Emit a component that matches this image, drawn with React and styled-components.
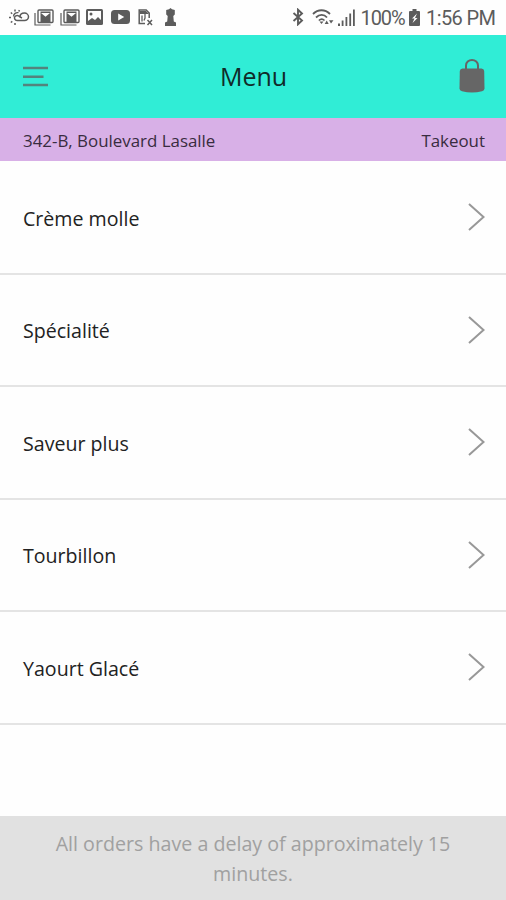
import styled, { createGlobalStyle } from "styled-components";

const GlobalStyle = createGlobalStyle`
  * {
    box-sizing: border-box;
  }

  body {
    margin: 0;
    background-color: #fefefe;
    font-family: "Open Sans", "Noto Sans", sans-serif;
  }
`;

const Screen = styled.div`
  display: flex;
  flex-direction: column;
  width: 506px;
  height: 900px;
  overflow: hidden;
`;

const StatusBar = styled.div`
  display: flex;
  justify-content: space-between;
  height: 34.5px;
  padding: 0 11px 0 9px;
  color: #5c5c5c;
`;

const StatusGroup = styled.div`
  display: flex;
  align-items: center;
`;

const StatusSlot = styled.span`
  margin-left: ${(props) => props.$space || "0"};

  svg {
    display: block;
  }
`;

const StatusText = styled.span`
  width: ${(props) => props.$width};
  margin-left: ${(props) => props.$space};
  padding-top: 1px;
  font-family: Roboto, sans-serif;
  font-size: 20px;
  line-height: 34px;
  letter-spacing: ${(props) => props.$spacing};
  white-space: nowrap;
`;

const Header = styled.header`
  display: grid;
  grid-template-columns: 60px 1fr 60px;
  align-items: center;
  height: 83.5px;
  padding: 0 21px 0 23px;
  background-color: #30edd6;
`;

const HeaderButton = styled.button`
  display: flex;
  justify-content: ${(props) => props.$align};
  padding: 0;
  border: 0;
  background: none;
`;

const Title = styled.h1`
  margin: 0;
  padding-right: 1px;
  font-size: 25px;
  font-weight: 400;
  line-height: 34px;
  text-align: center;
  color: #102b29;
`;

const OrderInfo = styled.div`
  display: flex;
  align-items: center;
  justify-content: space-between;
  height: 43px;
  padding: 1px 21px 0 23px;
  background-color: #d8b0e7;
  color: #382c40;
  font-size: 16.9px;
`;

const MenuList = styled.ul`
  flex: 1;
  margin: 0;
  padding: 1px 0 0;
  list-style: none;
`;

const MenuItem = styled.li`
  display: flex;
  align-items: center;
  justify-content: space-between;
  height: 112.5px;
  padding: 0 21px 0 23px;
  border-bottom: 2px solid #e4e4e4;
  color: #222222;
  font-size: 19.6px;
`;

const ItemName = styled.span`
  padding-top: 2px;
`;

const Notice = styled.footer`
  height: 84px;
  padding: 13px 40px 0;
  background-color: #e1e1e1;
  color: #a0a0a0;
  font-size: 19.65px;
  line-height: 29.5px;
  text-align: center;
`;

const items = [
  "Crème molle",
  "Spécialité",
  "Saveur plus",
  "Tourbillon",
  "Yaourt Glacé",
];

function WeatherIcon() {
  return (
    <svg width="21" height="18" viewBox="0 0 21 18" fill="none" stroke="currentColor">
      <path
        d="M8 12.500h7.500a4 3.700 0 0 0 0-7.400c-3 0-4.500 1.500-4.500 3.900M8 12.500a2.700 2.500 0 1 1 2.500-3.800l2.500 1.300"
        strokeWidth="1.500"
      />
      <path d="M4.500 8.500a4 4 0 0 1 5-3.800" strokeWidth="1.300" />
      <path d="M0 9.500h2M1.800 4.500l1.400 1.200M6 1.500v2M10.500 2.200l-.8 1.300M1.800 14.500l1.500-1.200M6 15v2" strokeWidth="1.500" />
    </svg>
  );
}

function MailIcon() {
  return (
    <svg width="20" height="17" viewBox="0 0 20 17" fill="none" stroke="currentColor">
      <path d="M1 4v12h15.500" strokeWidth="1.200" />
      <rect x="4" y="1" width="15" height="12.500" rx="1" strokeWidth="1.400" />
      <path d="M6.500 2.500h10V13h-10z" fill="currentColor" stroke="none" />
      <path d="M7 4h9l-4.500 3.800z" fill="#fefefe" stroke="none" />
    </svg>
  );
}

function PictureIcon() {
  return (
    <svg width="17" height="16" viewBox="0 0 17 16">
      <rect width="17" height="16" rx="1.500" fill="currentColor" />
      <path d="M2 2h13v9l-3-3-3 3-3-2-4 3z" fill="#fefefe" />
      <circle cx="5" cy="5" r="1.500" fill="currentColor" />
    </svg>
  );
}

function VideoIcon() {
  return (
    <svg width="19" height="14" viewBox="0 0 19 14">
      <rect width="19" height="14" rx="3.500" fill="currentColor" />
      <path d="M7.200 3.500v7l6-3.500z" fill="#fefefe" />
    </svg>
  );
}

function NoSimIcon() {
  return (
    <svg width="15" height="17" viewBox="0 0 15 17" fill="none" stroke="currentColor">
      <path d="M7 14.500H1.200V1h7l3 3v5" strokeWidth="1.500" />
      <path d="M2 2h6l3 3H2z" fill="currentColor" stroke="none" />
      <path d="M4 6.500v6M7 5v4l-1 2.500" strokeWidth="1.300" />
      <path d="M9.500 11l4.500 5M14 11l-4.500 5" strokeWidth="1.500" />
    </svg>
  );
}

function KeyholeIcon() {
  return (
    <svg width="11" height="18" viewBox="0 0 11 18" fill="currentColor">
      <path d="M5.500 0L7 1.200 9.800 2v4.500L8.300 8l.5 5.500L11 14.500V18H0v-3.500l2.200-1L2.700 8 1.200 6.500V2L4 1.200z" />
    </svg>
  );
}

function BluetoothIcon() {
  return (
    <svg width="12" height="18" viewBox="0 0 12 18" fill="none" stroke="currentColor" strokeWidth="1.900">
      <path d="M1.500 5l8.500 7.500-4 3.800V1.700l4 3.800L1.500 13" />
    </svg>
  );
}

function WifiIcon() {
  return (
    <svg width="22" height="17" viewBox="0 0 22 17" fill="none" stroke="currentColor">
      <path d="M1 5c5-5 12-5 17 0M4 8.500c3.500-3.500 8-3.500 11 0" strokeWidth="1.800" />
      <path d="M6.800 11.500c2-1.800 4-1.800 5.700 0" strokeWidth="1.600" />
      <path d="M7.500 12.500h4l-2 2.500zM14.700 11.500l2 3.500h-4zM19 14.500L17 11.300h4.500z" fill="currentColor" stroke="none" />
    </svg>
  );
}

function SignalIcon() {
  return (
    <svg width="17" height="17" viewBox="0 0 17 17" fill="currentColor">
      <path d="M0 14.500h2V17H0zM3.700 11.500h1.800V17H3.700zM7.500 8h1.800v9H7.500zM11.300 4.500h1.800V17h-1.800zM15 .500h1.800V17H15z" />
    </svg>
  );
}

function BatteryIcon() {
  return (
    <svg width="11" height="17" viewBox="0 0 11 17">
      <path d="M3.500 0h4v2H10a1 1 0 0 1 1 1v13a1 1 0 0 1-1 1H1a1 1 0 0 1-1-1V3a1 1 0 0 1 1-1h2.500z" fill="currentColor" />
      <path d="M8 4.500L3 9.500h2.500l-2 4.500L8.500 9H6z" fill="#fefefe" />
    </svg>
  );
}

function HamburgerIcon() {
  return (
    <svg width="25" height="21" viewBox="0 0 25 21" fill="#53847d">
      <path d="M0 .800h25v2.400H0zM0 9.500h20.500v2.400H0zM0 17.800h25v2.400H0z" />
    </svg>
  );
}

function BagIcon() {
  return (
    <svg width="26" height="34" viewBox="0 0 26 34">
      <path d="M7 10V6.500a6 5.500 0 0 1 12 0V10" fill="none" stroke="#666666" strokeWidth="2" />
      <path
        d="M3.500 9.500h19Q25 9.500 25.200 12L25.500 29.500Q25.500 31.500 23 32.200Q13 34.800 3 32.200Q.500 31.500.500 29.500L.800 12Q1 9.500 3.500 9.500z"
        fill="#666666"
      />
    </svg>
  );
}

function ChevronIcon() {
  return (
    <svg width="17" height="28" viewBox="0 0 17 28" fill="none" stroke="#989898" strokeWidth="2">
      <path d="M1 1l14.500 13L1 27" />
    </svg>
  );
}

const notifications = [
  { Icon: WeatherIcon },
  { Icon: MailIcon, space: "4px" },
  { Icon: MailIcon, space: "6px" },
  { Icon: PictureIcon, space: "6px" },
  { Icon: VideoIcon, space: "8px" },
  { Icon: NoSimIcon, space: "8px" },
  { Icon: KeyholeIcon, space: "12px" },
];

function App() {
  return (
    <>
      <GlobalStyle />
      <Screen>
        <StatusBar>
          <StatusGroup>
            {notifications.map(({ Icon, space }, index) => (
              <StatusSlot key={index} $space={space}>
                <Icon />
              </StatusSlot>
            ))}
          </StatusGroup>
          <StatusGroup>
            <StatusSlot>
              <BluetoothIcon />
            </StatusSlot>
            <StatusSlot $space="8px">
              <WifiIcon />
            </StatusSlot>
            <StatusSlot $space="4px">
              <SignalIcon />
            </StatusSlot>
            <StatusText $spacing="-1.1px" $width="44px" $space="5.5px">
              100%
            </StatusText>
            <StatusSlot $space="4.5px">
              <BatteryIcon />
            </StatusSlot>
            <StatusText $spacing="-0.6px" $width="69px" $space="6px">
              1:56 PM
            </StatusText>
          </StatusGroup>
        </StatusBar>
        <Header>
          <HeaderButton $align="flex-start" aria-label="Open menu">
            <HamburgerIcon />
          </HeaderButton>
          <Title>Menu</Title>
          <HeaderButton $align="flex-end" aria-label="Cart">
            <BagIcon />
          </HeaderButton>
        </Header>
        <OrderInfo>
          <span>342-B, Boulevard Lasalle</span>
          <span>Takeout</span>
        </OrderInfo>
        <MenuList>
          {items.map((item) => (
            <MenuItem key={item}>
              <ItemName>{item}</ItemName>
              <ChevronIcon />
            </MenuItem>
          ))}
        </MenuList>
        <Notice>All orders have a delay of approximately 15 minutes.</Notice>
      </Screen>
    </>
  );
}

export default App;
